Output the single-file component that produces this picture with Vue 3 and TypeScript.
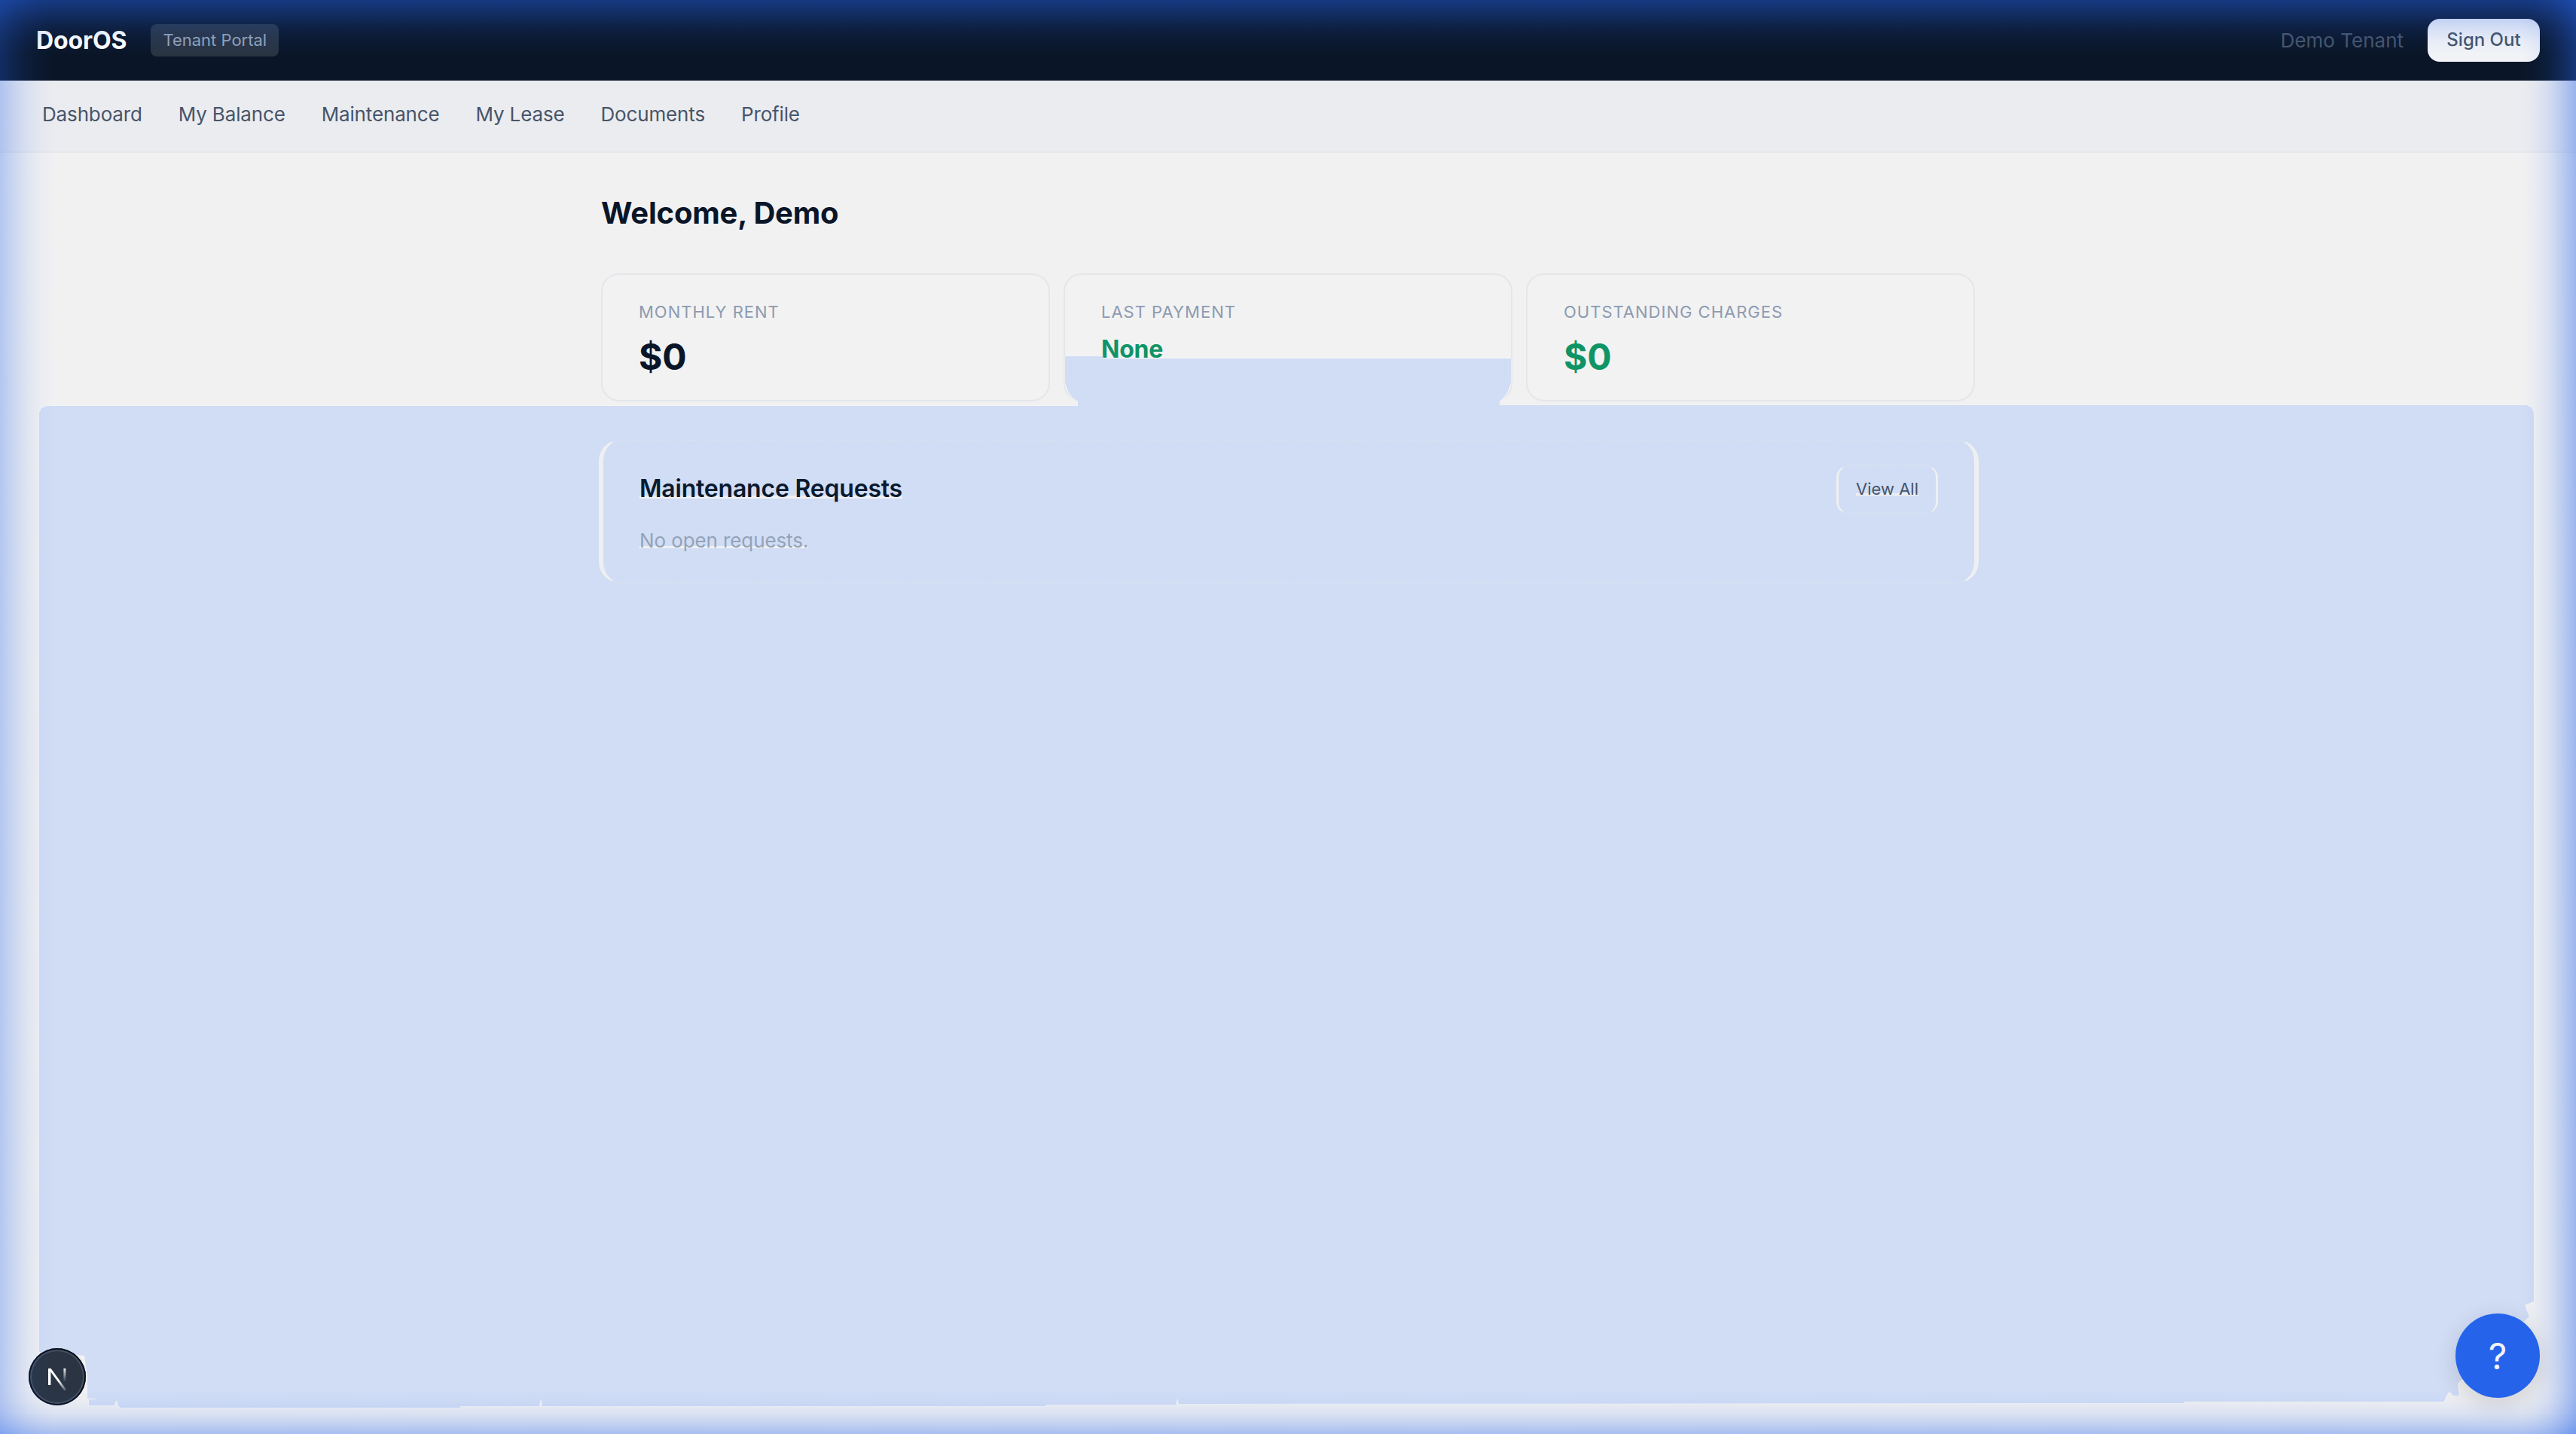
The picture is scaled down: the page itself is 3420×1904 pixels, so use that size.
<script setup lang="ts">
const navItems = ['Dashboard', 'My Balance', 'Maintenance', 'My Lease', 'Documents', 'Profile']

const stats = [
  { label: 'Monthly Rent', value: '$0', tone: '' },
  { label: 'Last Payment', value: 'None', tone: 'is-green is-small' },
  { label: 'Outstanding Charges', value: '$0', tone: 'is-green' },
]

// outline of the blue wash, page coordinates
const washPoints = [
  [52, 548], [55, 542], [62, 539], [1431, 539], [1431, 533], [1424, 528], [1418, 520], [1414, 508],
  [1414, 473], [1464, 473], [1464, 476], [2006, 476], [2006, 508], [2002, 520], [1996, 528], [1991, 533],
  [1991, 538], [3355, 538], [3361, 541], [3364, 548], [3364, 1728], [3352, 1733], [3358, 1748],
  [3263, 1837], [3265, 1853], [3257, 1853], [3252, 1848], [3248, 1853], [3245, 1861], [2900, 1861],
  [2900, 1863], [1565, 1864], [1563, 1857], [1561, 1865], [1390, 1865], [1387, 1867], [720, 1867],
  [718, 1857], [716, 1867], [611, 1867], [611, 1869], [160, 1869], [157, 1866], [155, 1859], [151, 1866],
  [118, 1866], [118, 1858], [127, 1858], [127, 1857], [116, 1857], [116, 1830], [112, 1800], [52, 1795],
]
const washClip = `polygon(${washPoints.map(([x, y]) => `${x}px ${y}px`).join(', ')})`
</script>

<template>
  <div class="page">
    <header class="topbar">
      <div class="brand">
        <span class="logo">DoorOS</span>
        <span class="portal">Tenant Portal</span>
      </div>
      <div class="account">
        <span class="who">Demo Tenant</span>
        <button class="signout">Sign Out</button>
      </div>
    </header>

    <nav class="tabs">
      <a v-for="item in navItems" :key="item" class="tab">{{ item }}</a>
    </nav>

    <main class="content">
      <h1 class="welcome">Welcome, Demo</h1>

      <section class="stats">
        <div v-for="s in stats" :key="s.label" class="stat">
          <div class="stat-label">{{ s.label }}</div>
          <div class="stat-value" :class="s.tone">{{ s.value }}</div>
        </div>
      </section>

      <section class="panel">
        <div class="panel-head">
          <h2 class="panel-title"><span class="residue">Maintenance Requests</span></h2>
          <button class="view-all"><span class="residue">View All</span></button>
        </div>
        <p class="empty"><span class="residue">No open requests.</span></p>
      </section>
    </main>

    <div class="wash-edge">
      <div class="wash" :style="{ clipPath: washClip }"></div>
    </div>

    <button class="help">?</button>

    <div class="dev-badge">
      <svg width="76" height="76" viewBox="0 0 76 76" fill="none">
        <defs>
          <linearGradient id="fadeDiag" x1="0" y1="0" x2="1" y2="1">
            <stop offset="0.55" stop-color="#ffffff" />
            <stop offset="1" stop-color="#ffffff" stop-opacity="0.15" />
          </linearGradient>
          <linearGradient id="fadeBar" x1="0" y1="0" x2="0" y2="1">
            <stop offset="0" stop-color="#ffffff" stop-opacity="0.9" />
            <stop offset="1" stop-color="#ffffff" stop-opacity="0.05" />
          </linearGradient>
        </defs>
        <rect x="26" y="27" width="3.4" height="22" fill="#ffffff" />
        <path d="M26 27h3.6L50 55l-2.4 1.4z" fill="url(#fadeDiag)" />
        <rect x="46.4" y="27" width="3" height="17" fill="url(#fadeBar)" />
      </svg>
    </div>

    <div class="glow"></div>
  </div>
</template>

<style>
html,
body {
  margin: 0;
  background: #f1f1f2;
}
</style>

<style scoped>
.page {
  position: relative;
  min-height: 1904px;
  overflow: hidden;
  background: #f1f1f2;
  font-family: Inter, 'Liberation Sans', sans-serif;
  color: #0a1628;
}

.topbar {
  height: 107px;
  box-sizing: border-box;
  display: flex;
  align-items: center;
  justify-content: space-between;
  padding: 0 48px 1px;
  background: #0a1628;
}

.brand {
  display: flex;
  align-items: center;
  gap: 32px;
}

.logo {
  font-size: 32px;
  font-weight: 700;
  letter-spacing: -0.1px;
  color: #ffffff;
}

.portal {
  padding: 0 16px;
  height: 43px;
  line-height: 43px;
  border-radius: 8px;
  font-size: 22px;
  color: #94a3b8;
  background: rgba(255, 255, 255, 0.13);
}

.account {
  display: flex;
  align-items: center;
  gap: 32px;
}

.who {
  font-size: 26px;
  color: #475569;
}

.signout {
  width: 149px;
  height: 57px;
  padding: 0 0 2px;
  border: none;
  border-radius: 16px;
  font-family: inherit;
  font-size: 24px;
  font-weight: 500;
  color: #475569;
  background: #f1f3f7;
}

.tabs {
  height: 96px;
  box-sizing: border-box;
  display: flex;
  align-items: center;
  padding: 0 32px 5px;
  background: #ebecf0;
  border-bottom: 2px solid #e6e8ec;
}

.tab {
  padding: 0 24px;
  font-size: 26px;
  letter-spacing: -0.15px;
  color: #475569;
}

.content {
  max-width: 1824px;
  margin: 0 auto;
  padding-top: 48px;
}

.welcome {
  margin: 0 0 48px;
  font-size: 40px;
  line-height: 64px;
  font-weight: 700;
  letter-spacing: -0.2px;
}

.stats {
  display: grid;
  grid-template-columns: repeat(3, 1fr);
  gap: 18px;
}

.stat {
  height: 170px;
  box-sizing: border-box;
  padding: 33px 48px 0;
  border: 2px solid #e5e6e9;
  border-radius: 24px;
  background: #f2f2f3;
}

.stat-label {
  font-size: 22px;
  line-height: 33px;
  letter-spacing: 1px;
  text-transform: uppercase;
  color: #8d9bb0;
}

.stat-value {
  margin-top: 13px;
  font-size: 48px;
  line-height: 60px;
  font-weight: 700;
  letter-spacing: -0.2px;
}

.stat-value.is-green {
  color: #0f9466;
}

.stat-value.is-small {
  font-size: 32px;
  line-height: 40px;
}

.panel {
  position: relative;
  z-index: 2;
  margin: 51px -5px 0 -3px;
  padding: 33px 48px;
  box-sizing: border-box;
  height: 190px;
  border-style: dotted solid;
  border-width: 1px 6px;
  border-color: rgba(225, 228, 232, 0.8) #eeeff1;
  border-radius: 28px;
}

.panel-head {
  display: flex;
  align-items: center;
  justify-content: space-between;
}

.panel-title {
  margin: 0 0 4px;
  font-size: 32px;
  font-weight: 600;
  letter-spacing: -0.2px;
  color: #0a1a2e;
}

.view-all {
  width: 135px;
  height: 64px;
  padding: 0 0 3px;
  border-style: dotted solid;
  border-width: 1px 3px;
  border-color: rgba(225, 228, 232, 0.9) #eeeff1;
  border-radius: 16px;
  background: transparent;
  font-family: inherit;
  font-size: 22px;
  font-weight: 400;
  color: #475569;
}

.empty {
  margin: 16px 0 0;
  font-size: 26px;
  line-height: 39px;
  letter-spacing: -0.1px;
  color: #94a3b8;
}

/* leftover pale strip along the baseline of text on the wash */
.residue {
  background: linear-gradient(transparent 74%, #eff0f3 74%, #eff0f3 84%, transparent 84%);
}

.wash-edge {
  position: absolute;
  inset: 0;
  z-index: 1;
  filter: drop-shadow(0 0 1px rgba(255, 255, 255, 0.8));
}

.wash {
  width: 100%;
  height: 100%;
  background: #d1ddf5;
}

.help {
  position: absolute;
  z-index: 3;
  left: 3260px;
  top: 1744px;
  width: 112px;
  height: 112px;
  padding: 0;
  border: none;
  border-radius: 50%;
  background: #2563eb;
  box-shadow: 0 8px 32px rgba(0, 0, 0, 0.14);
  font-family: inherit;
  font-size: 48px;
  color: #f1f3f7;
}

.dev-badge {
  position: absolute;
  z-index: 3;
  left: 38px;
  top: 1790px;
  width: 76px;
  height: 76px;
  border-radius: 50%;
  background: #2a3442;
  box-shadow: inset 0 0 0 2px #0a1020, inset 0 0 0 4px #46505f;
}

/* blue glow round the window edge, weaker on the left */
.glow {
  position: absolute;
  inset: 0;
  z-index: 4;
  pointer-events: none;
  background:
    linear-gradient(to right, rgba(37, 99, 235, 0.3), rgba(37, 99, 235, 0.19) 18px, rgba(37, 99, 235, 0.09) 36px, rgba(37, 99, 235, 0.03) 54px, transparent 72px),
    linear-gradient(to left, rgba(37, 99, 235, 0.42), rgba(37, 99, 235, 0.26) 18px, rgba(37, 99, 235, 0.12) 36px, rgba(37, 99, 235, 0.04) 54px, transparent 72px),
    linear-gradient(to bottom, rgba(37, 99, 235, 0.46), rgba(37, 99, 235, 0.3) 18px, rgba(37, 99, 235, 0.15) 36px, rgba(37, 99, 235, 0.05) 54px, transparent 72px),
    linear-gradient(to top, rgba(37, 99, 235, 0.36), rgba(37, 99, 235, 0.22) 14px, rgba(37, 99, 235, 0.1) 28px, rgba(37, 99, 235, 0.03) 44px, transparent 60px);
}
</style>
